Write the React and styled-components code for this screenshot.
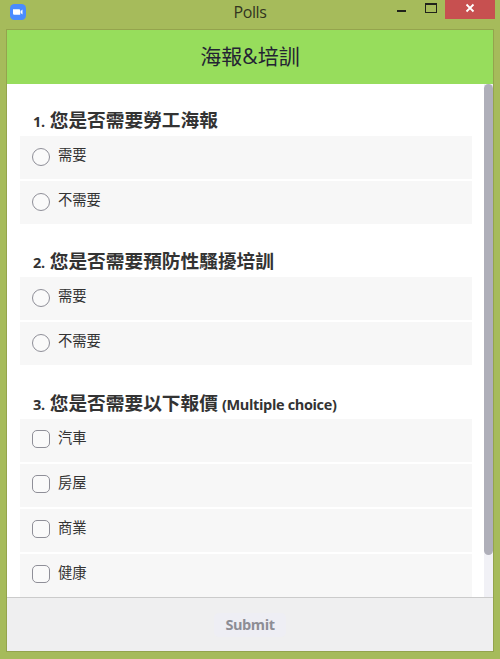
import React, { useState } from 'react'
import styled, { createGlobalStyle } from 'styled-components'

const GlobalStyle = createGlobalStyle`
    * {
        box-sizing: border-box;
    }
    body {
        margin: 0;
        overflow: hidden;
        font-family: "Open Sans", "Noto Sans CJK TC", sans-serif;
        color: #333;
    }
`

const Window = styled.div`
    display: flex;
    flex-direction: column;
    width: 500px;
    height: 659px;
    padding: 0 6px 7px;
    background: #a6bb5b;
`

const TitleBar = styled.div`
    display: grid;
    grid-template-columns: 1fr auto 1fr;
    height: 29px;
    flex-shrink: 0;
`

const AppIcon = styled.svg`
    display: block;
    width: 16px;
    height: 16px;
    margin: 4px 0 0 4px;
`

const WindowTitle = styled.div`
    font-size: 16px;
    line-height: 25px;
    letter-spacing: -0.4px;
    color: #33351f;
`

const Controls = styled.div`
    display: flex;
    justify-content: flex-end;
    align-items: flex-start;
    margin-right: -1px;
`

const ControlIcon = styled.svg`
    display: block;
    width: 100px;
    height: 19px;
`

const Panel = styled.div`
    display: flex;
    flex-direction: column;
    flex: 1;
    min-height: 0;
    border: 1px solid #94a44d;
    background: #fff;
`

const Header = styled.div`
    height: 54px;
    flex-shrink: 0;
    font-size: 21px;
    font-weight: 400;
    line-height: 53px;
    text-align: center;
    color: #232333;
    background: #97dd5c;
`

const Body = styled.div`
    display: flex;
    flex: 1;
    min-height: 0;
    justify-content: space-between;
`

const Questions = styled.div`
    width: 464.5px;
    padding: 22px 0 0 13px;
    overflow: hidden;
`

const Question = styled.div`
    margin-bottom: 23.4px;
`

const QuestionTitle = styled.div`
    display: flex;
    align-items: baseline;
    height: 30px;
    padding-left: 13px;
    line-height: 28px;
    font-size: 14.5px;
    font-weight: 700;
    letter-spacing: -0.35px;
    white-space: pre;
`

const QuestionText = styled.span`
    margin: 0 4px 0 5px;
    font-size: 18.7px;
    font-weight: 700;
    letter-spacing: 0;
`

const Options = styled.div`
    display: flex;
    flex-direction: column;
    gap: 2px;
`

const Option = styled.label`
    display: flex;
    height: 43px;
    padding-left: 11.5px;
    background: #f7f7f7;
`

const Mark = styled.input`
    appearance: none;
    width: 18px;
    height: 18px;
    margin: 11.5px 8.5px 0 0;
    border: 1px solid #8f8f98;
    border-radius: ${props => props.type === 'radio' ? '50%' : '5px'};
    background: #fafafa;
    &:checked {
        background: #2d8cff;
    }
`

const OptionText = styled.span`
    font-size: 14.3px;
    line-height: 38px;
`

const ScrollTrack = styled.div`
    width: 9px;
    background: #f1f1f6;
`

const ScrollThumb = styled.div`
    height: 471px;
    border-radius: 4.5px;
    background: #afafb9;
`

const Footer = styled.div`
    display: flex;
    flex-shrink: 0;
    height: 54px;
    align-items: center;
    justify-content: center;
    border-top: 1px solid #cbcbcb;
    background: #efeff0;
`

const Submit = styled.button`
    height: 24px;
    padding: 0 11px;
    border: none;
    border-radius: 5px;
    font-family: inherit;
    font-size: 14.5px;
    font-weight: 700;
    line-height: 24px;
    letter-spacing: -0.4px;
    color: #8d8d95;
    background: #eeeef4;
`

const polls = [
    { text: '您是否需要勞工海報', options: ['需要', '不需要'] },
    { text: '您是否需要預防性騷擾培訓', options: ['需要', '不需要'] },
    { text: '您是否需要以下報價', options: ['汽車', '房屋', '商業', '健康'], multiple: true },
]

const Poll = ({ number, poll }) => {
    const [selected, setSelected] = useState([])

    function toggle(option) {
        if (!poll.multiple) {
            setSelected([option])
        } else if (selected.includes(option)) {
            setSelected(selected.filter(item => item !== option))
        } else {
            setSelected([...selected, option])
        }
    }

    return (
        <Question>
            <QuestionTitle>
                <span>{number}.</span>
                <QuestionText>{poll.text}</QuestionText>
                {poll.multiple && <span>(Multiple choice)</span>}
            </QuestionTitle>
            <Options>
                {poll.options.map(option => (
                    <Option key={option}>
                        <Mark
                            type={poll.multiple ? 'checkbox' : 'radio'}
                            checked={selected.includes(option)}
                            onChange={() => toggle(option)}
                        />
                        <OptionText>{option}</OptionText>
                    </Option>
                ))}
            </Options>
        </Question>
    )
}

const App = () => {
    return (
        <>
            <GlobalStyle />
            <Window>
                <TitleBar>
                    <AppIcon viewBox="0 0 16 16">
                        <rect width="16" height="16" rx="4.5" fill="#4a8cff" />
                        <path d="M3 5.3h6q1.2 0 1.2 1.2v4.2H4.2Q3 10.7 3 9.5zM10.7 7l1.8-1.5v5L10.7 9z" fill="#fff" />
                    </AppIcon>
                    <WindowTitle>Polls</WindowTitle>
                    <Controls>
                        <ControlIcon viewBox="0 0 100 19">
                            <path d="M2 10h9v2H2z" fill="#20221a" />
                            <path d="M30 3h12v10H30zM31 5v7h10V5z" fillRule="evenodd" fill="#20221a" />
                            <path d="M50 0h50v19H50z" fill="#c75050" />
                            <path d="M71.5 4.5l7 7M78.5 4.5l-7 7" stroke="#fff" strokeWidth="1.8" />
                        </ControlIcon>
                    </Controls>
                </TitleBar>
                <Panel>
                    <Header>海報&amp;培訓</Header>
                    <Body>
                        <Questions>
                            {polls.map((poll, index) => (
                                <Poll key={poll.text} number={index + 1} poll={poll} />
                            ))}
                        </Questions>
                        <ScrollTrack>
                            <ScrollThumb />
                        </ScrollTrack>
                    </Body>
                    <Footer>
                        <Submit>Submit</Submit>
                    </Footer>
                </Panel>
            </Window>
        </>
    )
}

export default App
